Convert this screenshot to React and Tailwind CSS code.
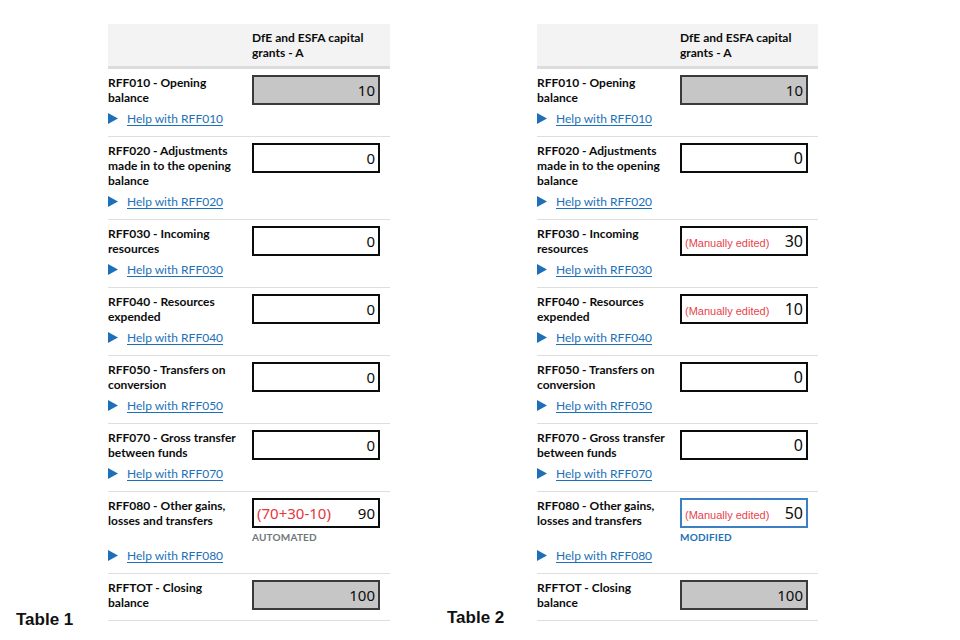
import React from "react";

const rows1 = [
  { lines: ["RFF010 - Opening", "balance"], help: "RFF010", value: "10", ro: true },
  { lines: ["RFF020 - Adjustments", "made in to the opening", "balance"], help: "RFF020", value: "0" },
  { lines: ["RFF030 - Incoming", "resources"], help: "RFF030", value: "0" },
  { lines: ["RFF040 - Resources", "expended"], help: "RFF040", value: "0" },
  { lines: ["RFF050 - Transfers on", "conversion"], help: "RFF050", value: "0" },
  { lines: ["RFF070 - Gross transfer", "between funds"], help: "RFF070", value: "0" },
  { lines: ["RFF080 - Other gains,", "losses and transfers"], help: "RFF080", value: "90", formula: "(70+30-10)", caption: "AUTOMATED" },
  { lines: ["RFFTOT - Closing", "balance"], value: "100", ro: true },
];

const rows2 = [
  { lines: ["RFF010 - Opening", "balance"], help: "RFF010", value: "10", ro: true },
  { lines: ["RFF020 - Adjustments", "made in to the opening", "balance"], help: "RFF020", value: "0" },
  { lines: ["RFF030 - Incoming", "resources"], help: "RFF030", value: "30", note: "(Manually edited)" },
  { lines: ["RFF040 - Resources", "expended"], help: "RFF040", value: "10", note: "(Manually edited)" },
  { lines: ["RFF050 - Transfers on", "conversion"], help: "RFF050", value: "0" },
  { lines: ["RFF070 - Gross transfer", "between funds"], help: "RFF070", value: "0" },
  { lines: ["RFF080 - Other gains,", "losses and transfers"], help: "RFF080", value: "50", note: "(Manually edited)", caption: "MODIFIED", modified: true },
  { lines: ["RFFTOT - Closing", "balance"], value: "100", ro: true },
];

function Input({ row, big }) {
  let cls = "h-[30px] flex items-center justify-between pl-[3px] pr-[3px] border-2 ";
  if (row.ro) cls += "bg-[#c6c6c6] border-[#3a3a3a]";
  else if (row.modified) cls += "bg-white border-[#3d7fc4]";
  else cls += "bg-white border-[#0b0c0c]";
  return (
    <div className={cls}>
      <span>
        {row.formula && (
          <span className="font-['Noto_Sans','Open_Sans',sans-serif] text-[15px] text-[#e5363c]">{row.formula}</span>
        )}
        {row.note && (
          <span className="font-['Liberation_Sans',Arial,sans-serif] text-[11px] text-[#e8434a]">{row.note}</span>
        )}
      </span>
      <span
        className={
          "font-['Noto_Sans','Open_Sans',sans-serif] text-[#0b0c0c] leading-none " +
          (big ? "text-[16px]" : "text-[15px]")
        }
      >
        {row.value}
      </span>
    </div>
  );
}

function Row({ row, second }) {
  return (
    <div className="border-b border-[#dedede] pt-[6px] pb-[10px]">
      <div className={"grid " + (second ? "grid-cols-[143px_128px]" : "grid-cols-[144px_128px]")}>
        <div className="font-['Lato','Noto_Sans',sans-serif] text-[12px] leading-[15px] font-bold text-[#0b0c0c]">
          {row.lines.map((l, i) => (
            <div key={i} className="whitespace-nowrap">
              {l}
            </div>
          ))}
        </div>
        <div>
          <Input row={row} big={second && !row.ro} />
          {row.caption && (
            <div
              className={
                "mt-[3px] font-['Lato','Noto_Sans',sans-serif] text-[10px] leading-[12px] font-bold tracking-[0.2px] " +
                (row.modified ? "text-[#1d70b8]" : "text-[#6f777b]")
              }
            >
              {row.caption}
            </div>
          )}
        </div>
      </div>
      {row.help && (
        <div className={(row.caption ? "mt-[5px]" : "mt-[6px]") + " flex items-center h-[15px]"}>
          <svg width="10" height="11" viewBox="0 0 10 11" className="shrink-0">
            <polygon points="0,0 10,5.5 0,11" fill="#1d70b8" />
          </svg>
          <a
            href="#"
            className="ml-[9px] font-['Lato','Noto_Sans',sans-serif] text-[12px] leading-[15px] text-[#1d70b8] underline underline-offset-2"
          >
            Help with {row.help}
          </a>
        </div>
      )}
    </div>
  );
}

function Table({ rows, second }) {
  return (
    <div className={"shrink-0 " + (second ? "w-[281px]" : "w-[282px]")}>
      <div
        className={
          "bg-[#f3f3f3] border-b-[3px] border-[#dcdcdc] pt-[6px] pb-[6px] grid " +
          (second ? "grid-cols-[143px_1fr]" : "grid-cols-[144px_1fr]")
        }
      >
        <div />
        <div className="font-['Lato','Noto_Sans',sans-serif] text-[12px] leading-[15px] font-bold text-[#0b0c0c]">
          <div>DfE and ESFA capital</div>
          <div>grants - A</div>
        </div>
      </div>
      {rows.map((r, i) => (
        <Row key={i} row={r} second={second} />
      ))}
    </div>
  );
}

export default function App() {
  return (
    <div className="w-[960px] h-[640px] bg-white flex items-stretch pt-[24px] overflow-hidden">
      <div className="w-[108px] shrink-0 flex flex-col justify-end pl-[16px] pb-[8px]">
        <span className="font-['Liberation_Sans',Arial,sans-serif] text-[17px] font-bold text-[#111]">Table 1</span>
      </div>
      <Table rows={rows1} />
      <div className="w-[147px] shrink-0 flex flex-col justify-end pl-[57px] pb-[10px]">
        <span className="font-['Liberation_Sans',Arial,sans-serif] text-[17px] font-bold text-[#111]">Table 2</span>
      </div>
      <Table rows={rows2} second />
    </div>
  );
}
